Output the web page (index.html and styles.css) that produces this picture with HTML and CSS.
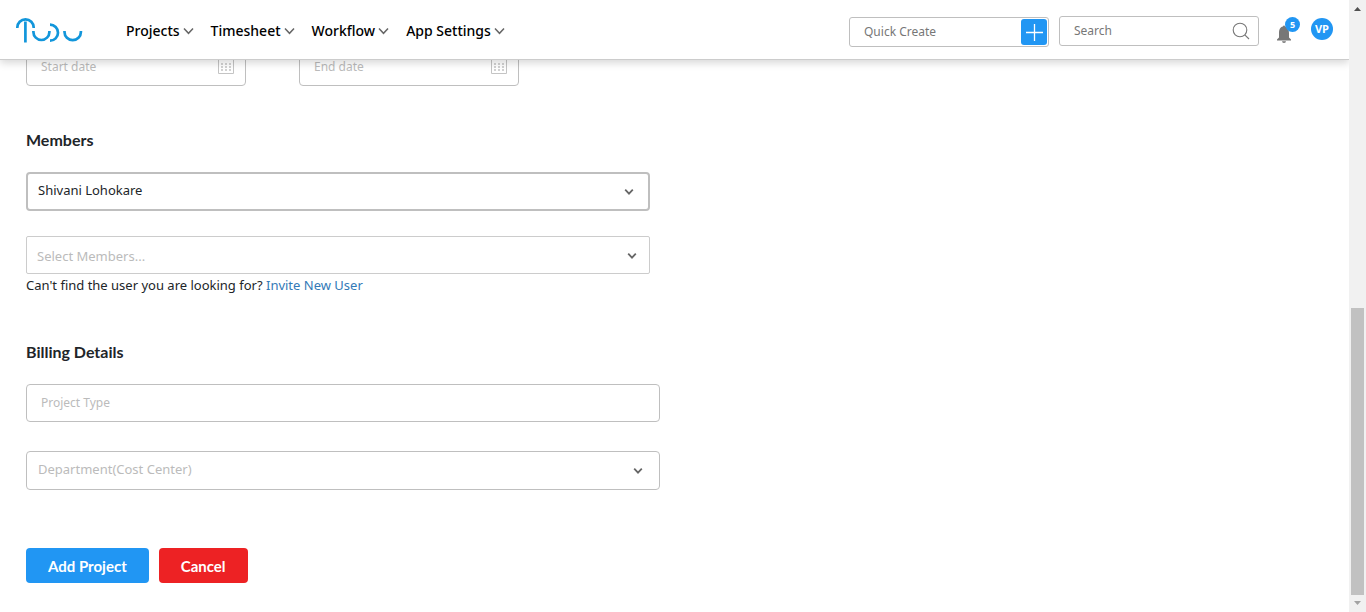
FILE: index.html
```html
<!DOCTYPE html>
<html lang="en">
<head>
<meta charset="utf-8">
<meta name="viewport" content="width=device-width, initial-scale=1">
<title>Tudu - Add Project</title>
<link rel="stylesheet" href="styles.css">
</head>
<body>
<svg class="sprite" aria-hidden="true">
  <symbol id="chevron-thin" viewBox="0 0 11 8"><path d="M1 1.5 5.5 6.3 10 1.5" fill="none" stroke="currentColor" stroke-width="1.5"/></symbol>
  <symbol id="chevron" viewBox="0 0 10 8"><path d="M1.2 1.7 5 5.6 8.800 1.700" fill="none" stroke="currentColor" stroke-width="1.8"/></symbol>
  <symbol id="calendar" viewBox="0 0 16 15"><path d="M.5 0V14.500H15.500V0M0 .5H16" fill="none" stroke="currentColor"/><path d="M3 5H13M3 8H13M3 11H13" fill="none" stroke="currentColor" stroke-width="1.500" stroke-dasharray="2 2"/></symbol>
</svg>
<div class="page">
  <header class="topbar">
    <a class="logo" href="#" aria-label="Tudu home">
      <svg width="68" height="28" viewBox="0 0 68 28" fill="none" stroke="#1296db" stroke-width="2.700">
        <path d="M2.300 12V11.500A8.200 8.200 0 0 1 18.700 11.500V12M10.400 5.500V26.500M18.400 15V16A8 8 0 0 0 34.400 16V15M35 8.700A8 8 0 0 1 35 24.700M49.500 15V16A8.200 8.200 0 0 0 65.900 16V15"/>
      </svg>
    </a>
    <nav class="menu" aria-label="Main">
      <button class="menu-item" type="button">Projects<svg width="11" height="8"><use href="#chevron-thin"/></svg></button>
      <button class="menu-item" type="button">Timesheet<svg width="11" height="8"><use href="#chevron-thin"/></svg></button>
      <button class="menu-item" type="button">Workflow<svg width="11" height="8"><use href="#chevron-thin"/></svg></button>
      <button class="menu-item" type="button">App Settings<svg width="11" height="8"><use href="#chevron-thin"/></svg></button>
    </nav>
    <div class="tools">
      <div class="tool-box quick">
        <input type="text" placeholder="Quick Create" aria-label="Quick Create">
        <button class="plus" type="button" aria-label="Create"><svg width="26" height="26" viewBox="0 0 26 26"><path d="M5 13.500H22M13.500 5V22" stroke="#fff" stroke-width="1.300"/></svg></button>
      </div>
      <div class="tool-box search">
        <input type="text" placeholder="Search" aria-label="Search">
        <svg width="18" height="18" viewBox="0 0 18 18" fill="none" stroke="#777" stroke-width="1.100"><circle cx="8" cy="8" r="6.800"/><path d="M12.800 12.800 17 17"/></svg>
      </div>
      <button class="bell" type="button" aria-label="Notifications, 5 new">
        <svg width="16" height="18" viewBox="0 0 16 18" fill="#777"><path d="M7 1.500a1 1 0 0 1 2 0C12 2 13 5 13 8V12.500L15 14.500V15.500H1V14.500L3 12.500V8C3 5 4 2 7 1.500ZM6 16.200H10A2 1.700 0 0 1 6 16.200Z"/></svg>
        <span class="badge">5</span>
      </button>
      <button class="avatar" type="button" aria-label="Account VP">VP</button>
    </div>
  </header>
  <main>
    <form class="form">
      <div class="dates">
        <label class="field date"><input type="text" placeholder="Start date" aria-label="Start date"><svg class="cal" width="16" height="15"><use href="#calendar"/></svg></label>
        <label class="field date"><input type="text" placeholder="End date" aria-label="End date"><svg class="cal" width="16" height="15"><use href="#calendar"/></svg></label>
      </div>
      <section class="members">
        <h2>Members</h2>
        <label class="field owner"><select aria-label="Project owner"><option>Shivani Lohokare</option></select><svg class="arrow" width="10" height="8"><use href="#chevron"/></svg></label>
        <label class="field pick"><select class="empty" aria-label="Select Members"><option>Select Members...</option></select><svg class="arrow" width="10" height="8"><use href="#chevron"/></svg></label>
        <p class="hint">Can't find the user you are looking for? <a href="#">Invite New User</a></p>
      </section>
      <section class="billing">
        <h2>Billing Details</h2>
        <label class="field"><input type="text" placeholder="Project Type" aria-label="Project Type"></label>
        <label class="field department"><select class="empty" aria-label="Department (Cost Center)"><option>Department(Cost Center)</option></select><svg class="arrow" width="10" height="8"><use href="#chevron"/></svg></label>
      </section>
      <div class="actions">
        <button class="btn add" type="button">Add Project</button>
        <button class="btn cancel" type="button">Cancel</button>
      </div>
    </form>
  </main>
</div>
<div class="scrollbar" aria-hidden="true">
  <svg width="17" height="17" viewBox="0 0 17 17"><path d="M5 11 8.500 7 12 11Z" fill="#505050"/></svg>
  <div class="track"><div class="thumb"></div></div>
  <svg width="17" height="17" viewBox="0 0 17 17"><path d="M5 6 8.500 10 12 6Z" fill="#a3a3a3"/></svg>
</div>
</body>
</html>
```
FILE: styles.css
```css
*, *::before, *::after { box-sizing: border-box; }
body {
  margin: 0;
  display: grid;
  grid-template-columns: minmax(0, 1fr) 17px;
  height: 100vh;
  background: #fff;
  color: #212529;
  font: 13px/20px "Noto Sans", "Open Sans", sans-serif;
}
button, input, select { font: inherit; color: inherit; }
button { border: 0; padding: 0; background: none; cursor: pointer; }
.sprite { position: absolute; width: 0; height: 0; }
.page { height: 100vh; overflow: hidden; }

.topbar {
  position: relative;
  z-index: 1;
  display: flex;
  align-items: center;
  height: 60px;
  padding: 0 16px 0 15px;
  background: #fff;
  border-bottom: 1px solid #ccc;
  box-shadow: 0 3px 8px rgba(0, 0, 0, .16);
}
.logo { display: flex; width: 68px; margin-right: 43px; }
.menu { display: flex; gap: 17px; padding-top: 3px; }
.menu-item { display: flex; align-items: center; gap: 3px; color: #000; font-size: 14px; font-weight: 500; white-space: nowrap; }
.menu-item svg { color: #666; }
.tools { display: flex; align-items: center; gap: 10px; margin-left: auto; padding-top: 4px; }
.tool-box {
  display: flex;
  align-items: center;
  width: 200px;
  height: 30px;
  border: 1px solid #bfbfbf;
  border-radius: 3px;
}
.tool-box input { flex: 1; min-width: 0; padding: 0 14px; border: 0; outline: 0; background: none; color: #777; font-size: 12px; }
.tool-box input::placeholder { color: #777; opacity: 1; }
.plus { display: flex; margin-right: 1px; border-radius: 3px; background: #2196f3; }
.search { margin-bottom: 2px; }
.search svg { margin-right: 8px; }
.bell { position: relative; display: flex; width: 32px; padding: 5px 0 0 7px; }
.badge {
  position: absolute;
  top: -3px;
  right: 1px;
  width: 15px;
  height: 15px;
  border-radius: 50%;
  background: #2196f3;
  color: #fff;
  font: bold 9px/15px "Open Sans", sans-serif;
  text-align: center;
}
.avatar { width: 22px; height: 22px; margin-bottom: 6px; border-radius: 50%; background: #2196f3; color: #fff; font: bold 11px/22px "Open Sans", sans-serif; }

.form { display: flex; flex-direction: column; margin-top: -12px; padding: 0 26px; }
.field { display: grid; align-items: center; height: 38px; border: 1px solid #bfbfbf; border-radius: 4px; }
.field > * { grid-area: 1 / 1; }
.field input, .field select {
  width: 100%;
  height: 100%;
  min-width: 0;
  padding: 0 10px;
  border: 0;
  outline: 0;
  appearance: none;
  background: none;
}
.field input { padding: 0 14px 2px; font-size: 12px; }
.field input::placeholder { color: #bbb; opacity: 1; }
.field .empty { color: #bbb; }
.owner select, .department select { padding-bottom: 3px; }
.department select { padding-left: 11px; }
.arrow { justify-self: end; margin-right: 16px; color: #666; pointer-events: none; }
.cal { justify-self: end; margin: 0 11px 2px 0; color: #c4c4c4; }
.dates { display: flex; gap: 53px; }
.date { width: 220px; }
h2 { margin: 0; font: bold 16px/24px Lato, sans-serif; }
.members { width: 624px; max-width: 100%; margin-top: 42px; }
.owner { height: 39px; margin-top: 20px; border-width: 2px; }
.owner .arrow { margin-right: 14px; }
.pick { margin-top: 25px; border-radius: 2px; border-color: #ccc; }
.pick select { padding-top: 2px; }
.pick .arrow { margin: 2px 12px 0 0; }
.hint { margin: 1px 0 0; }
.hint a { color: #337ab7; text-decoration: none; }
.billing { width: 634px; max-width: 100%; margin-top: 45px; }
.billing .field { margin-top: 20px; }
.billing .department { height: 39px; margin-top: 29px; }
.actions { display: flex; gap: 10px; margin-top: 58px; }
.btn { height: 35px; padding: 0 22px; border-radius: 4px; color: #fff; font: bold 15px/20px Lato, sans-serif; }
.add { background: #2196f3; }
.cancel { background: #ed2224; }

.scrollbar { display: flex; flex-direction: column; height: 100vh; background: #f1f1f1; }
.track { display: flex; flex: 1; flex-direction: column; justify-content: flex-end; padding: 0 2px; }
.thumb { height: calc(50% - 2px); background: #c1c1c1; }
```
